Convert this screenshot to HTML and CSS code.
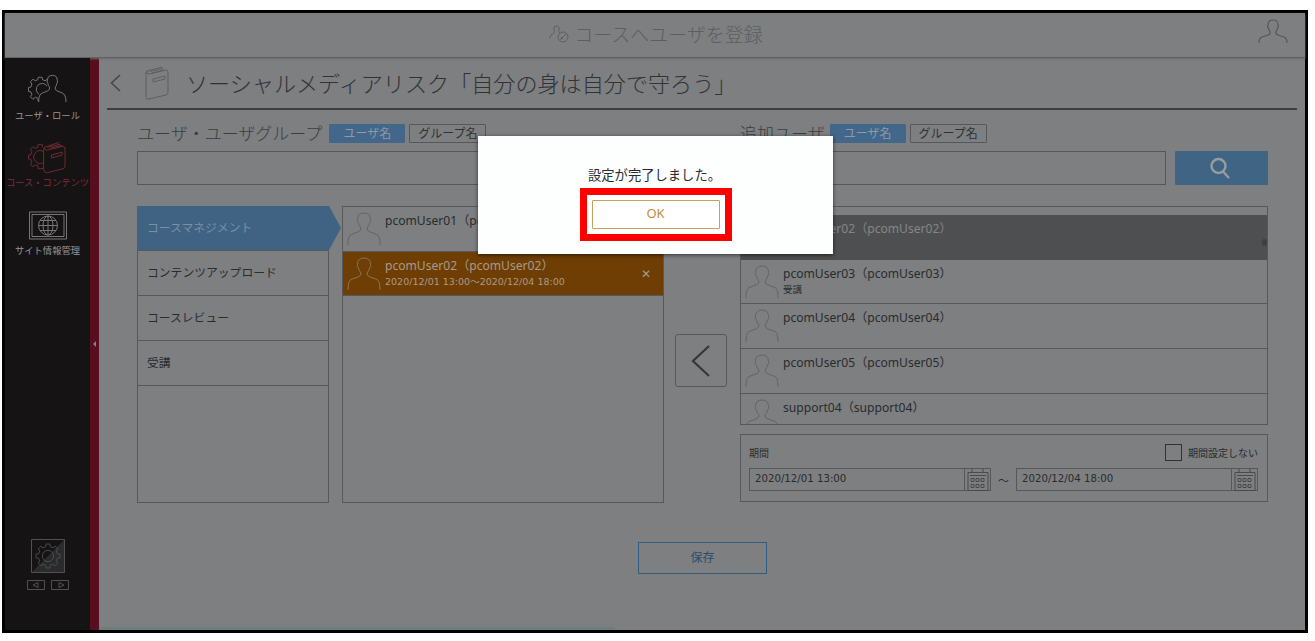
FILE: index.html
```
<!DOCTYPE html>
<html lang="ja">
<head>
    <meta charset="UTF-8">
    <meta name="viewport" content="width=device-width, initial-scale=1.0">
    <title>コースへユーザを登録</title>
    <link rel="stylesheet" href="styles.css">
</head>
<body>

<!-- Shared icons -->
<svg class="sprite">
    <symbol id="person" viewBox="0 0 34 34">
        <path d="M1 33Q1 24 4 22.500L11 20Q14.500 18.500 14 16Q12 14 11.500 11Q9.500 10 10.500 7.500Q10.500 1 17 1Q23.500 1 23.500 7.500Q24.500 10 22.500 11Q22 14 20 16Q19.500 18.500 23 20L30 22.500Q33 24 33 33"/>
    </symbol>
    <symbol id="gear" viewBox="0 0 30 30">
        <path d="M25.700 12.300L28.800 12.800V17.200L25.700 17.700L24.400 20.700L26.300 23.200L23.200 26.300L20.700 24.400L17.700 25.700L17.200 28.800H12.800L12.300 25.700L9.300 24.400L6.800 26.300L3.700 23.200L5.600 20.700L4.300 17.700L1.200 17.200V12.800L4.300 12.300L5.600 9.300L3.700 6.800L6.800 3.700L9.300 5.600L12.300 4.300L12.800 1.200H17.200L17.700 4.300L20.700 5.600L23.200 3.700L26.300 6.800L24.400 9.300Z"/>
        <circle cx="15" cy="15" r="6.500"/>
    </symbol>
    <symbol id="book" viewBox="0 0 24 34">
        <path d="M2 5Q0 6 1 8V30Q1 34 4 33L21 29Q23 28 23 26V6Q23 4 21 4L4 8Q1 8 2 5L17 1M5 5.500L18 2.500M7 7L19 4M8 13L20 10V13L8 16Z"/>
    </symbol>
    <symbol id="calendar" viewBox="0 0 22 22">
        <path d="M1 3.500H21V21.500H1ZM5 0V4M16 0V4M3 6.500H19M4 9.500h3v3h-3zM9 9.500h3v3h-3zM14 9.500h3v3h-3zM4 15.500h3v3h-3zM9 15.500h3v3h-3zM14 15.500h3v3h-3z"/>
    </symbol>
</svg>

<div class="window">
    <header class="header">
        <h1>
            <svg class="header-icon" viewBox="0 0 20 18">
                <path d="M1 13Q1 9 5 8Q6 7 5 5Q4 1 7 1Q11 1 10 5Q9 7 11 8"/>
                <circle cx="14" cy="12" r="5"/>
                <path d="M11 15L17 9M12 12l2 2"/>
            </svg>
            コースへユーザを登録
        </h1>
        <svg class="account" viewBox="0 0 30 25">
            <path d="M1 24Q1 19 4 18L10 16Q13 15 12 12.500Q10.500 11 10.500 9Q9 8 10 6Q10 1 15 1Q20 1 20 6Q21 8 19.500 9Q19.500 11 18 12.500Q17 15 20 16L26 18Q29 19 29 24"/>
        </svg>
    </header>

    <div class="body">
        <nav class="sidebar">
            <a class="nav-item nav-users">
                <svg viewBox="0 0 40 30">
                    <path d="M10.500 27.500L10 24.500L7.500 23.500L5 25.500L2.500 23L4 20.500L3 18L0.500 17.500V13.500L3 13L4 10L2.500 7.500L5 5L7.500 6.500L10 5.500L10.500 3H14.500L15 5.500L17.500 6.500L20 5M19.500 12A6 6 0 1 0 11.500 20.500"/>
                    <path d="M11 28.500Q10.500 20.500 15 19L20 17Q23 16 22 13Q20.500 11.500 20.500 9.500Q19 8 20 6Q20 1 25 1Q30 1 30 6Q31 8 29.500 9.500Q29.500 11.500 28 13Q27 16 30 17L35 19Q39 20.500 39 28.500"/>
                </svg>
                <span>ユーザ・ロール</span>
            </a>
            <a class="nav-item nav-courses active">
                <svg viewBox="0 0 40 33">
                    <path d="M16 26.500L14.500 28H10.500L10 25L7.500 24L5 26L2.500 23.500L4 21L3 18.500L0.500 18V14L3 13.500L4 10.500L2.500 8L5 5.500L7.500 7L10 6L10.500 3H14.500L15 6M16 10.500A6.500 6.500 0 1 0 16 21.500"/>
                    <path d="M17 6Q16 7 16 9V29Q17 33 20 32L36 28Q38 27 38 25V8Q38 5 36 5L19 9Q16 8 17 6L32 1M20 6L33 3M23 7L35 4M24 14L35 11V14L24 17Z"/>
                </svg>
                <span>コース・コンテンツ</span>
            </a>
            <a class="nav-item nav-site">
                <svg viewBox="0 0 38 28">
                    <path d="M.5 .5H37.500V27.500H.5ZM3 3H35V25H3Z"/>
                    <circle cx="19" cy="14" r="9.500"/>
                    <ellipse cx="19" cy="14" rx="5" ry="9.500"/>
                    <path d="M19 4.500V23.500M9.500 14H28.500M11 9H27M11 19H27"/>
                </svg>
                <span>サイト情報管理</span>
            </a>
            <div class="nav-tools">
                <svg class="theme" viewBox="0 0 34 34">
                    <path class="theme-half" d="M34 0V34H0Z"/>
                    <path d="M.5 .5H33.500V33.500H.5Z"/>
                    <use href="#gear" x="4" y="4" width="26" height="26"/>
                </svg>
                <div class="pager">
                    <svg viewBox="0 0 18 10"><path d="M.5 .5H17.500V9.500H.5ZM11 2.500V7.500L6 5Z"/></svg>
                    <svg viewBox="0 0 18 10"><path d="M.5 .5H17.500V9.500H.5ZM8 2.500V7.500L13 5Z"/></svg>
                </div>
            </div>
        </nav>
        <div class="handle"></div>

        <main class="main">
            <div class="course">
                <svg class="back" viewBox="0 0 11 18"><path d="M10 1L1.500 9L10 17"/></svg>
                <svg class="course-icon"><use href="#book"/></svg>
                <h2>ソーシャルメディアリスク「自分の身は自分で守ろう」</h2>
            </div>

            <div class="columns">
                <section class="left">
                    <div class="section-title">
                        <h3>ユーザ・ユーザグループ</h3>
                        <button class="tag on">ユーザ名</button>
                        <button class="tag">グループ名</button>
                    </div>
                    <div class="search">
                        <input type="text">
                        <button></button>
                    </div>
                    <div class="lists">
                        <ul class="roles">
                            <li class="selected">コースマネジメント</li>
                            <li>コンテンツアップロード</li>
                            <li>コースレビュー</li>
                            <li>受講</li>
                        </ul>
                        <ul class="users">
                            <li>
                                <svg><use href="#person"/></svg>
                                <div class="name">pcomUser01（pcomUser01）</div>
                            </li>
                            <li class="chosen">
                                <svg><use href="#person"/></svg>
                                <div class="name">pcomUser02（pcomUser02）<small>2020/12/01 13:00～2020/12/04 18:00</small></div>
                                <span class="remove">✕</span>
                            </li>
                        </ul>
                    </div>
                </section>

                <button class="move">
                    <svg viewBox="0 0 20 34"><path d="M18 2L2 17L18 32"/></svg>
                </button>

                <section class="right">
                    <div class="section-title">
                        <h3>追加ユーザ</h3>
                        <button class="tag on">ユーザ名</button>
                        <button class="tag">グループ名</button>
                    </div>
                    <div class="search">
                        <input type="text">
                        <button>
                            <svg viewBox="0 0 20 22"><circle cx="8.500" cy="9" r="7"/><path d="M13 14.500L19 21"/></svg>
                        </button>
                    </div>
                    <ul class="users candidates">
                        <li class="added">
                            <svg><use href="#person"/></svg>
                            <div class="name">pcomUser02（pcomUser02）</div>
                            <i class="thumb"></i>
                        </li>
                        <li>
                            <svg><use href="#person"/></svg>
                            <div class="name">pcomUser03（pcomUser03）<small>受講</small></div>
                        </li>
                        <li>
                            <svg><use href="#person"/></svg>
                            <div class="name">pcomUser04（pcomUser04）</div>
                        </li>
                        <li>
                            <svg><use href="#person"/></svg>
                            <div class="name">pcomUser05（pcomUser05）</div>
                        </li>
                        <li>
                            <svg><use href="#person"/></svg>
                            <div class="name">support04（support04）</div>
                        </li>
                    </ul>
                    <div class="period">
                        <div class="period-head">
                            <span class="period-label">期間</span>
                            <label><i class="checkbox"></i>期間設定しない</label>
                        </div>
                        <div class="dates">
                            <div class="date"><span>2020/12/01 13:00</span><svg><use href="#calendar"/></svg></div>
                            <span class="tilde">～</span>
                            <div class="date"><span>2020/12/04 18:00</span><svg><use href="#calendar"/></svg></div>
                        </div>
                    </div>
                </section>
            </div>

            <button class="save">保存</button>
        </main>
    </div>
    <div class="status"></div>
</div>

<!-- Completion dialog -->
<div class="dialog">
    <p>設定が完了しました。</p>
    <div class="highlight">
        <button class="ok">OK</button>
    </div>
</div>

</body>
</html>
```
FILE: styles.css
```
* {
    box-sizing: border-box;
}

body {
    margin: 0;
    padding: 10px 0 0 2px;
    background: #fff;
    color: #292b2e;
    font-family: "Noto Sans", "Noto Sans CJK JP", sans-serif;
    font-size: 12px;
    overflow: hidden;
}

h1, h2, h3, ul, p {
    margin: 0;
    padding: 0;
    list-style: none;
}

h1, h2, h3 {
    font-weight: 300;
}

button {
    font-family: inherit;
    padding: 0;
    border: none;
}

svg {
    fill: none;
    stroke: #5d5f60;
    stroke-width: 1;
    flex: none;
}

.sprite {
    display: none;
}

.window {
    width: 1306px;
    height: 623px;
    border: 3px solid #000;
    background: #7d7f80;
    display: flex;
    flex-direction: column;
    position: relative;
}

.header {
    height: 45px;
    flex: none;
    display: flex;
    align-items: center;
    justify-content: center;
    position: relative;
    border-bottom: 1px solid #606162;
    box-shadow: 0 1px 2px #6b6d6e;
}

.header h1 {
    display: flex;
    align-items: center;
    gap: 5px;
    font-size: 19px;
    color: #5c5e60;
    padding: 0 0 2px 2px;
}

.header-icon {
    width: 20px;
    height: 18px;
}

.account {
    position: absolute;
    right: 17px;
    top: 6px;
    width: 30px;
    height: 25px;
    stroke: #55585a;
    stroke-width: 1.2;
}

.body {
    flex: 1;
    display: flex;
    min-height: 0;
}

.sidebar {
    width: 85px;
    background: #161314;
    display: flex;
    flex-direction: column;
    align-items: center;
    padding-top: 16px;
    position: relative;
}

.nav-item {
    display: flex;
    flex-direction: column;
    align-items: center;
    color: #969696;
    font-size: 9.300px;
    line-height: 14px;
    white-space: nowrap;
}

.nav-item svg {
    width: 39px;
    height: 30px;
    stroke: #777;
}

.nav-users span {
    margin-top: 5px;
}

.nav-courses {
    margin-top: 18px;
    color: #7d3038;
}

.nav-courses svg {
    height: 33px;
    stroke: #6f2c31;
}

.nav-courses span {
    margin-top: 2px;
}

.nav-site {
    margin-top: 21px;
}

.nav-site svg {
    width: 38px;
    height: 29px;
}

.nav-site span {
    margin-top: 4px;
}

.nav-tools {
    margin-top: auto;
    padding-bottom: 40px;
    display: flex;
    flex-direction: column;
    align-items: center;
    gap: 7px;
}

.nav-tools svg {
    stroke: #505252;
    display: block;
}

.theme {
    width: 34px;
    height: 34px;
}

.nav-tools .theme-half {
    fill: #292b2c;
    stroke: none;
}

.pager {
    display: flex;
    gap: 6px;
}

.pager svg {
    width: 18px;
    height: 10px;
}

.handle {
    width: 9px;
    background: #570f20;
    display: flex;
    align-items: center;
}

.handle::after {
    content: "";
    margin-left: 3px;
    border: 3px solid transparent;
    border-right-color: #93797d;
    border-left: none;
}

.main {
    flex: 1;
    min-width: 0;
    padding: 0 8px;
}

.course {
    height: 52px;
    border-bottom: 2px solid #3c3e40;
    display: flex;
    align-items: center;
    padding: 0 0 0 3px;
}

.back {
    width: 11px;
    height: 18px;
    stroke: #45484a;
    stroke-width: 1.6;
}

.course-icon {
    width: 24px;
    height: 34px;
    margin: 0 17px 0 24px;
}

.course h2 {
    font-size: 22.100px;
    line-height: 40px;
    color: #303336;
}

.columns {
    display: flex;
    padding: 14px 29px 0 30px;
}

.left {
    width: 527px;
}

.right {
    width: 528px;
}

.section-title {
    display: flex;
    align-items: center;
    height: 19px;
    gap: 4px;
}

.section-title h3 {
    font-size: 17px;
    line-height: 19px;
    color: #3b3d40;
    margin: -1px 1px 0 0;
}

.left .section-title h3 {
    margin-right: 3px;
}

.tag {
    width: 77px;
    height: 19px;
    border: 1px solid #55585a;
    border-radius: 1px;
    background: transparent;
    color: #303234;
    font-size: 12px;
    line-height: 16px;
}

.tag.on {
    width: 76px;
    border-color: #42678a;
    background: #42678a;
    color: #8f9aa4;
}

.search {
    display: flex;
    gap: 9px;
    margin-top: 8px;
}

.search input {
    flex: 1;
    min-width: 0;
    height: 34px;
    background: transparent;
    border: 1px solid #55585a;
}

.search button {
    width: 93px;
    height: 34px;
    background: #406483;
    border-radius: 1px;
    display: flex;
    align-items: center;
    justify-content: center;
}

.search svg {
    width: 20px;
    height: 22px;
    margin-right: 3px;
    stroke: #999c9e;
    stroke-width: 2.4;
}

.lists {
    display: flex;
    gap: 13px;
    margin-top: 21px;
}

.roles {
    width: 192px;
    height: 297px;
    border: 1px solid #56585a;
}

.roles li {
    height: 45px;
    border-bottom: 1px solid #56585a;
    padding-left: 9px;
    font-size: 11.800px;
    line-height: 43px;
}

.roles .selected {
    width: 204px;
    height: 44px;
    margin: -1px 0 0 -1px;
    padding-left: 10px;
    border: none;
    background: #406384;
    color: #7990a5;
    clip-path: polygon(0 0, 192px 0, 100% 50%, 192px 100%, 0 100%);
    position: relative;
}

.roles .selected + li {
    border-top: 1px solid #56585a;
    height: 46px;
}

.users {
    flex: 1;
    height: 297px;
    border: 1px solid #56585a;
    overflow: hidden;
}

.users li {
    height: 44.700px;
    border-bottom: 1px solid #56585a;
    display: flex;
    padding: 5px 0 0 4px;
    position: relative;
}

.users svg {
    width: 34px;
    height: 34px;
    stroke: #626465;
}

.name {
    margin-left: 4px;
    font-size: 12.100px;
    line-height: 18px;
}

.name small {
    display: block;
    font-family: "DejaVu Sans", "Noto Sans CJK JP", sans-serif;
    font-size: 9.500px;
    line-height: 14px;
}

.users .chosen {
    background: #6e3e05;
    color: #a99a87;
}

.chosen svg {
    stroke: #8c7354;
}

.remove {
    margin: 9px 12px 0 auto;
    font-size: 12px;
    line-height: 16px;
}

.candidates {
    height: 219px;
    margin-top: 21px;
    padding-top: 8px;
}

.users .added {
    background: #4e4f51;
    border-color: #4e4f51;
    color: #858687;
}

.thumb {
    position: absolute;
    right: 0;
    top: 24px;
    width: 5px;
    height: 7px;
    border-radius: 2px;
    background: #3f4041;
}

.move {
    width: 52px;
    height: 53px;
    margin: 210px 13px 0 11px;
    border: 1px solid #56585a;
    border-radius: 3px;
    background: transparent;
    display: flex;
    align-items: center;
    justify-content: center;
}

.move svg {
    width: 20px;
    height: 34px;
    stroke: #353739;
    stroke-width: 2.2;
}

.period {
    height: 68px;
    margin-top: 9px;
    border: 1px solid #56585a;
    padding: 9px 9px 0 8px;
}

.period-head, .period label, .dates, .date {
    display: flex;
    align-items: center;
}

.period-head {
    justify-content: space-between;
    height: 17px;
    font-size: 10px;
    line-height: 14px;
}

.checkbox {
    width: 17px;
    height: 17px;
    border: 1px solid #303234;
    margin-right: 6px;
}

.dates {
    margin-top: 7px;
    justify-content: space-between;
}

.date {
    width: 242px;
    height: 23px;
    border: 1px solid #55585a;
    font-family: "DejaVu Sans", sans-serif;
    font-size: 10.200px;
    padding-left: 5px;
}

.date svg {
    width: 26px;
    height: 22px;
    margin-left: auto;
    border-left: 1px solid #55585a;
    padding-left: 1px;
    stroke: #484a4c;
}

.date span {
    margin-top: -2px;
}

.tilde {
    font-size: 11px;
}

.save {
    display: block;
    width: 129px;
    height: 32px;
    margin: 39px auto 0 531px;
    padding-bottom: 2px;
    border: 1px solid #335d80;
    background: transparent;
    color: #2c4e6b;
    font-size: 12px;
}

.status {
    position: absolute;
    left: 94px;
    bottom: 0;
    width: 516px;
    height: 3px;
    background: #6d7e7f;
}

.dialog {
    position: absolute;
    left: 478px;
    top: 136px;
    width: 355px;
    height: 118px;
    background: #fdfefe;
    box-shadow: 0 1px 4px rgba(0, 0, 0, 0.6);
    padding-top: 29px;
    display: flex;
    flex-direction: column;
    align-items: center;
}

.dialog p {
    font-size: 13.300px;
    line-height: 20px;
    margin-left: -2px;
}

.highlight {
    margin-top: 3px;
    width: 152px;
    height: 53px;
    border: 7px solid #fe0000;
    padding-bottom: 1px;
    display: flex;
    align-items: center;
    justify-content: center;
}

.ok {
    width: 128px;
    height: 29px;
    padding-bottom: 2px;
    border: 1px solid #c7a15a;
    border-radius: 1px;
    background: #fff;
    color: #c08d42;
    font-size: 13px;
}
```
